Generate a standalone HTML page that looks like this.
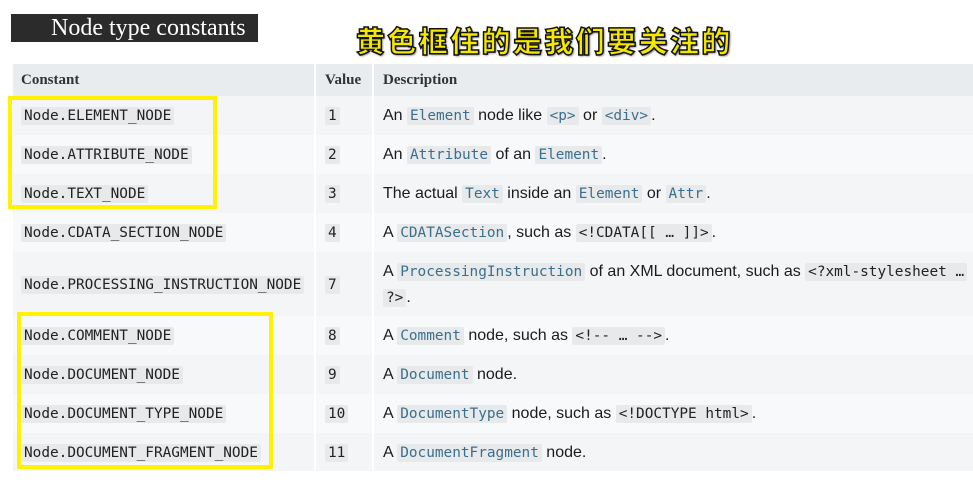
<!DOCTYPE html>
<html><head><meta charset="utf-8"><style>
body{margin:0;width:973px;height:487px;background:#fff;position:relative;overflow:hidden;font-family:"Liberation Sans",sans-serif;}
.h{position:absolute;left:11px;top:14px;width:247px;height:28px;background:#2b2b2b;color:#fff;font-family:"Liberation Serif",serif;font-size:24px;line-height:28px;box-sizing:border-box;padding-left:40px;white-space:nowrap;}
.cn{position:absolute;left:356px;top:22px;font-family:"Noto Sans CJK SC",sans-serif;font-weight:900;font-size:29px;line-height:36px;color:#f5e800;-webkit-text-stroke:1.5px #111;letter-spacing:2.4px;text-shadow:1px 1px 2px #555;}
.r{position:absolute;left:13px;width:960px;}
.c{position:absolute;top:1px;bottom:0;display:flex;align-items:center;box-sizing:border-box;white-space:nowrap;}
.c1{left:0;width:300px;padding-left:8px}
.c2{left:303px;width:56px;padding-left:9px}
.c3{left:361px;right:0;padding-left:9px;font-size:16px;color:#1b1b1b;line-height:25px}
.hd .c{font-family:"Liberation Serif",serif;font-weight:bold;font-size:15px;color:#333;}
code{font-family:"DejaVu Sans Mono","Liberation Mono",monospace;font-size:14.4px;background:#e8e9ea;color:#222;padding:1px 3px;border-radius:2px;}
.l{color:#3a6f8d}
.vl{position:absolute;top:64px;height:407px;width:2px;background:#fff}
.box{position:absolute;border:4px solid #fff200;box-sizing:border-box;}
</style></head><body>
<div class="h">Node type constants</div>
<div class="cn">黄色框住的是我们要关注的</div>

<div class="r hd" style="top:64px;height:32px;background:#e8ecef"><div class="c c1">Constant</div><div class="c c2">Value</div><div class="c c3" style="font-size:15px;color:#333">Description</div></div>
<div class="r" style="top:96px;height:39px;background:#f4f5f6"><div class="c c1"><code>Node.ELEMENT_NODE</code></div><div class="c c2"><code>1</code></div><div class="c c3"><span>An <code class="l">Element</code> node like <code class="l">&lt;p&gt;</code> or <code class="l">&lt;div&gt;</code>.</span></div></div>
<div class="r" style="top:135px;height:39px;background:#f8f9fa"><div class="c c1"><code>Node.ATTRIBUTE_NODE</code></div><div class="c c2"><code>2</code></div><div class="c c3"><span>An <code class="l">Attribute</code> of an <code class="l">Element</code>.</span></div></div>
<div class="r" style="top:174px;height:39px;background:#f4f5f6"><div class="c c1"><code>Node.TEXT_NODE</code></div><div class="c c2"><code>3</code></div><div class="c c3"><span>The actual <code class="l">Text</code> inside an <code class="l">Element</code> or <code class="l">Attr</code>.</span></div></div>
<div class="r" style="top:213px;height:39px;background:#f8f9fa"><div class="c c1"><code>Node.CDATA_SECTION_NODE</code></div><div class="c c2"><code>4</code></div><div class="c c3"><span>A <code class="l">CDATASection</code>, such as <code>&lt;!CDATA[[ … ]]&gt;</code>.</span></div></div>
<div class="r" style="top:252px;height:64px;background:#f4f5f6"><div class="c c1"><code>Node.PROCESSING_INSTRUCTION_NODE</code></div><div class="c c2"><code>7</code></div><div class="c c3"><span>A <code class="l">ProcessingInstruction</code> of an XML document, such as <code>&lt;?xml-stylesheet …</code><br><code>?&gt;</code>.</span></div></div>
<div class="r" style="top:316px;height:39px;background:#f8f9fa"><div class="c c1"><code>Node.COMMENT_NODE</code></div><div class="c c2"><code>8</code></div><div class="c c3"><span>A <code class="l">Comment</code> node, such as <code>&lt;!-- … --&gt;</code>.</span></div></div>
<div class="r" style="top:355px;height:39px;background:#f4f5f6"><div class="c c1"><code>Node.DOCUMENT_NODE</code></div><div class="c c2"><code>9</code></div><div class="c c3"><span>A <code class="l">Document</code> node.</span></div></div>
<div class="r" style="top:394px;height:39px;background:#f8f9fa"><div class="c c1"><code>Node.DOCUMENT_TYPE_NODE</code></div><div class="c c2"><code>10</code></div><div class="c c3"><span>A <code class="l">DocumentType</code> node, such as <code>&lt;!DOCTYPE html&gt;</code>.</span></div></div>
<div class="r" style="top:433px;height:38px;background:#f4f5f6"><div class="c c1"><code>Node.DOCUMENT_FRAGMENT_NODE</code></div><div class="c c2"><code>11</code></div><div class="c c3"><span>A <code class="l">DocumentFragment</code> node.</span></div></div>
<div class="vl" style="left:314px"></div><div class="vl" style="left:372px"></div>
<div class="box" style="left:8px;top:96px;width:209px;height:113px"></div>
<div class="box" style="left:17px;top:312px;width:256px;height:157px"></div>
</body></html>
